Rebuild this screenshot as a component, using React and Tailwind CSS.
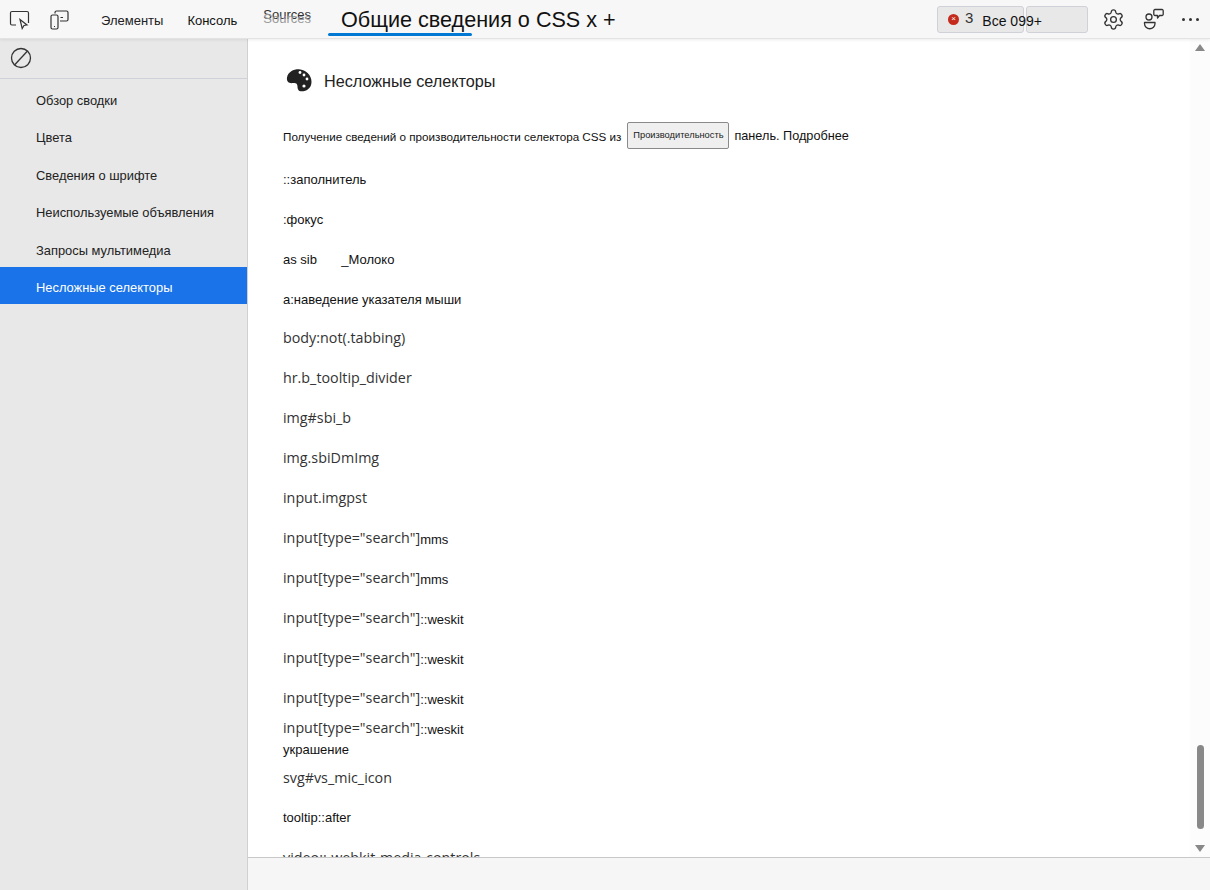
import React from "react";
import { Settings } from "lucide-react";

const sidebarItems = [
  "Обзор сводки",
  "Цвета",
  "Сведения о шрифте",
  "Неиспользуемые объявления",
  "Запросы мультимедиа",
  "Несложные селекторы",
];

const latin = "font-['Open_Sans','Liberation_Sans',sans-serif] text-[14.3px] text-[#333]";
const cyr = "font-['Liberation_Sans',sans-serif] text-[13px] text-[#111]";

// h = row height, top of next row follows in flow
const rows = [
  { h: 40, small: "::заполнитель" },
  { h: 40, small: ":фокус" },
  { h: 40, small: "as sib\u00a0\u00a0\u00a0\u00a0\u00a0\u00a0\u2009_Молоко" },
  { h: 39, small: "a:наведение указателя мыши" },
  { h: 40, big: "body:not(.tabbing)" },
  { h: 40, big: "hr.b_tooltip_divider" },
  { h: 40, big: "img#sbi_b" },
  { h: 40, big: "img.sbiDmImg" },
  { h: 40, big: "input.imgpst" },
  { h: 40, big: 'input[type="search"]', small: "mms" },
  { h: 40, big: 'input[type="search"]', small: "mms" },
  { h: 40, big: 'input[type="search"]', small: "::weskit" },
  { h: 40, big: 'input[type="search"]', small: "::weskit" },
  { h: 30, big: 'input[type="search"]', small: "::weskit" },
  { h: 21, big: 'input[type="search"]', small: "::weskit" },
  { h: 29, small: "украшение" },
  { h: 39, big: "svg#vs_mic_icon" },
  { h: 41, small: "tooltip::after" },
  { h: 39, big: "video::-webkit-media-controls" },
];

const InspectIcon = () => (
  <svg width="22" height="20" viewBox="0 0 22 20" fill="none" stroke="#333" strokeWidth="1.2">
    <path d="M7 15H3a1.5 1.5 0 0 1-1.5-1.500V3A1.500 1.500 0 0 1 3 1.500h15A1.500 1.500 0 0 1 19.500 3v10" />
    <path d="M11 9.500l7 5.500-3 .5-1.800 3z" fill="#f7f7f7" />
  </svg>
);

const DeviceIcon = () => (
  <svg width="20" height="20" viewBox="0 0 20 20" fill="none" stroke="#333" strokeWidth="1.200">
    <path d="M5 3.500V2.500A1.500 1.500 0 0 1 6.500 1h10A1.500 1.500 0 0 1 18 2.500v7a1.500 1.500 0 0 1-1.500 1.500H10" />
    <rect x="1" y="5" width="7" height="14" rx="1.500" />
    <path d="M10.500 7.500h2.500M4 16.500h1" />
  </svg>
);

const FeedbackIcon = () => (
  <svg width="22" height="22" viewBox="0 0 22 22" fill="none" stroke="#333" strokeWidth="1.300" strokeLinejoin="round">
    <circle cx="6" cy="9" r="3" />
    <path d="M1.500 14.500h10.500v1a5.250 5.250 0 0 1-10.500 0z" />
    <path d="M12 1.500h7a1.200 1.200 0 0 1 1.200 1.200v3.600a1.200 1.200 0 0 1-1.200 1.200h-2.500L14.500 10V7.500H12a1.200 1.200 0 0 1-1.200-1.200V2.700A1.200 1.200 0 0 1 12 1.500z" />
  </svg>
);

const BanIcon = () => (
  <svg width="22" height="22" viewBox="0 0 22 22" fill="none" stroke="#333" strokeWidth="1.300">
    <circle cx="11" cy="11" r="9.500" />
    <path d="M4.500 18L17.500 4" />
  </svg>
);

const PaletteIcon = () => (
  <svg width="40" height="36" viewBox="0 0 40 36">
    <path
      fill="#222"
      d="M7 16.500C8 10.500 14 8 19 8.200c7 .4 12.500 6 12.500 12.800 0 5.800-4.500 9.300-10 9.300-3.200 0-4-2.300-4-4.800 0-3-1.800-4-4.500-3.500C9.500 22.700 6.300 21 7 16.500z"
    />
    <g fill="#fff">
      <circle cx="20" cy="11.500" r="1.400" />
      <circle cx="24" cy="14" r="1.400" />
      <circle cx="27" cy="18" r="1.400" />
      <circle cx="24" cy="25" r="1.600" />
    </g>
  </svg>
);

const Row = ({ h, big, small }) => (
  <div className="flex items-start shrink-0" style={{ height: h }}>
    {big && <span className={latin + " leading-[20px]"}>{big}</span>}
    {small && <span className={cyr + (big ? " leading-[20px] mt-[2px]" : " leading-[20px] mt-px")}>{small}</span>}
  </div>
);

export default function App() {
  return (
    <div className="w-[1210px] h-[890px] flex flex-col overflow-hidden bg-white font-['Liberation_Sans',sans-serif]">
      {/* toolbar */}
      <div className="h-[39px] shrink-0 flex items-center bg-[#f7f7f7] border-b border-[#e3e3e3] shadow-[0_1px_3px_rgba(0,0,0,0.08)] relative z-10">
        <div className="ml-[9px] mt-px flex items-center gap-[19px]">
          <InspectIcon />
          <DeviceIcon />
        </div>
        <span className="ml-[31px] mt-[3px] text-[13px] text-[#222]">Элементы</span>
        <span className="ml-[24px] mt-[3px] text-[13px] text-[#111]">Консоль</span>
        <span className="ml-[26px] -mt-[9px] text-[13px] leading-[15px] text-[#333] relative">
          Sources
          <span className="absolute left-0 top-[4px] text-[#999] whitespace-nowrap">Sources</span>
        </span>
        <div className="ml-[17px] h-full w-[144px] relative shrink-0 overflow-visible">
          <span className="absolute left-[13px] top-[5px] text-[21.6px] leading-[30px] text-[#111] whitespace-nowrap">Общие сведения о CSS x +</span>
          <div className="absolute left-0 bottom-[2px] w-full h-[3px] rounded-full bg-[#0078d4]" />
        </div>
        <div className="ml-[465px] flex items-center">
          <div className="w-[87px] h-[27px] shrink-0 flex items-center rounded-[3px] bg-[#e8e8e8] border border-[#d0d0d8] relative z-10">
            <span className="ml-[10px] w-[11px] h-[11px] shrink-0 rounded-full bg-[#c42b1c] flex items-center justify-center text-white text-[8px] leading-none">×</span>
            <span className="ml-[6px] text-[15px] leading-[18px] text-[#333] -mt-[2px]">3</span>
            <span className="ml-[9px] text-[14px] leading-[18px] text-[#111] mt-[3px] whitespace-nowrap">Все 099+</span>
          </div>
          <div className="ml-[2px] w-[62px] h-[27px] shrink-0 rounded-[3px] bg-[#e8e8e8] border border-[#d0d0d8]" />
        </div>
        <div className="ml-[14px] flex items-center"><Settings size={23} strokeWidth={1.4} color="#333" /></div>
        <div className="ml-[18px] flex items-center"><FeedbackIcon /></div>
        <div className="ml-[17px] flex items-center gap-[4px]">
          <span className="w-[3px] h-[3px] rounded-full bg-[#333]" />
          <span className="w-[3px] h-[3px] rounded-full bg-[#333]" />
          <span className="w-[3px] h-[3px] rounded-full bg-[#333]" />
        </div>
      </div>

      <div className="flex-1 flex min-h-0">
        {/* sidebar */}
        <div className="w-[248px] shrink-0 bg-[#e8e8e8] border-r border-[#d0d0d0] flex flex-col">
          <div className="h-[40px] shrink-0 flex items-center pl-[10px] pb-[2px] border-b border-[#d0d0d8]">
            <BanIcon />
          </div>
          <div className="flex flex-col">
            {sidebarItems.map((item) => (
              <div
                key={item}
                className={
                  item === "Несложные селекторы"
                    ? "h-[37.500px] flex items-center pl-[36px] pt-[4px] text-[12.900px] text-white bg-[#1a73e8]"
                    : "h-[37.500px] flex items-center pl-[36px] pt-[5px] text-[12.900px] text-[#222]"
                }
              >
                {item}
              </div>
            ))}
          </div>
        </div>

        {/* content */}
        <div className="flex-1 min-w-0 flex flex-col">
          <div className="flex-1 min-h-0 flex overflow-hidden">
            <div className="flex-1 min-w-0 pl-[35px] flex flex-col">
              <div className="h-[52px] mt-[14px] shrink-0 flex items-center">
                <div className="-ml-[3px] shrink-0 flex"><PaletteIcon /></div>
                <span className="ml-[4px] text-[16.200px] text-[#222] mt-[4px]">Несложные селекторы</span>
              </div>
              <div className="mt-[10px] h-[41px] shrink-0 flex items-center text-[#111] whitespace-nowrap">
                <span className="text-[11.670px] mt-[2px]">Получение сведений о производительности селектора CSS из</span>
                <span className="ml-[6px] w-[102px] h-[27px] shrink-0 flex items-center justify-center rounded-[2px] bg-[#efefef] border border-[#8a8a8a] text-[9.300px] text-[#222]">Производительность</span>
                <span className="ml-[5px] text-[12.700px] mt-[2px]">панель. Подробнее</span>
              </div>
              <div className="mt-[13px] flex flex-col">
                {rows.map((r, i) => (
                  <Row key={i} {...r} />
                ))}
              </div>
            </div>
            {/* scrollbar */}
            <div className="w-[20px] shrink-0 flex flex-col items-center bg-[#fcfcfc] pt-[5px] pb-[5px]">
              <div className="w-0 h-0 border-x-[5px] border-x-transparent border-b-[7px] border-b-[#888]" />
              <div className="flex-1" />
              <div className="w-[7px] h-[84px] rounded-full bg-[#888]" />
              <div className="w-0 h-0 mt-[16px] border-x-[5px] border-x-transparent border-t-[7px] border-t-[#888]" />
            </div>
          </div>
          <div className="h-[33px] shrink-0 bg-[#f6f6f6] border-t border-[#c8c8c8]" />
        </div>
      </div>
    </div>
  );
}
